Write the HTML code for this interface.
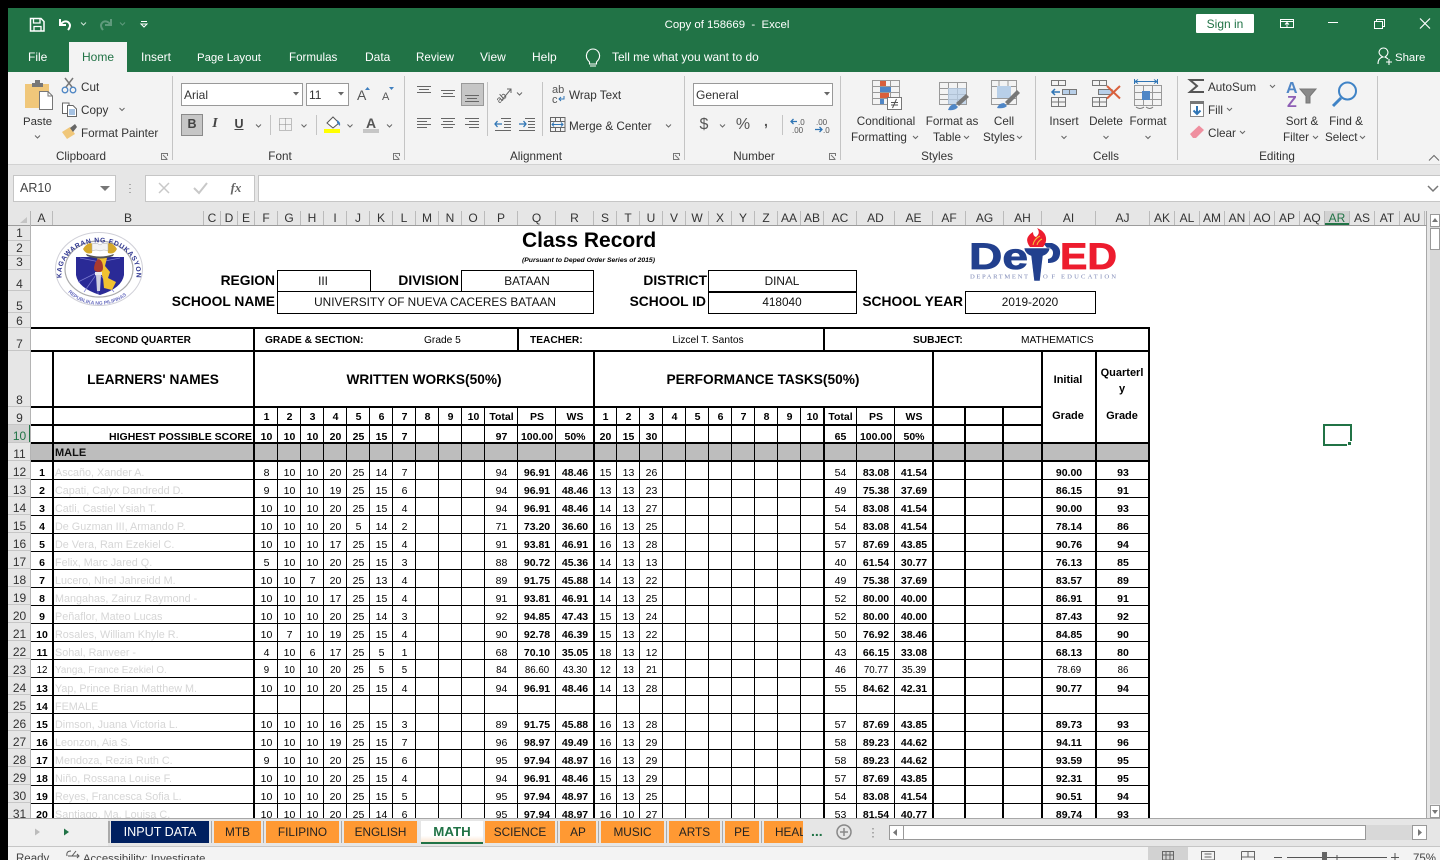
<!DOCTYPE html>
<html><head><meta charset="utf-8"><title>Copy of 158669 - Excel</title>
<style>
html,body{margin:0;padding:0;background:#000;width:1440px;height:860px;overflow:hidden}
body{position:relative;font-family:"Liberation Sans",sans-serif}
.a{position:absolute}
.t{position:absolute;white-space:nowrap;line-height:16px;font-size:11.7px;color:#333}
.t:not([style*="font-size"]):not(.h):not(.s):not(.v):not(.m):not(.g):not(.w){margin-top:1px}
.c{transform:translateX(-50%)}
.r{transform:translateX(-100%)}
.w{color:#fff;font-size:12px}
.k{color:#000}.b{font-weight:bold}
.h{font-size:13.8px;font-weight:bold;color:#000}
.s{font-size:10.2px;color:#000}
.v{font-size:11.8px;color:#111}
.m{font-size:13.7px;font-weight:bold;color:#000}
.g{font-size:11px;font-weight:bold;color:#000}
.l{position:absolute;background:#000}
#cols{position:absolute;left:31px;top:211px;height:14px;display:flex}
#cols i{font-style:normal;display:block;box-sizing:border-box;border-right:1px solid #bbb;text-align:center;font-size:12px;line-height:14px;color:#333;height:14px}
#rows{position:absolute;left:8px;top:225px;width:23px;height:593px;overflow:hidden;background:#e6e6e6}
#rows i{font-style:normal;display:flex;align-items:flex-end;justify-content:center;box-sizing:border-box;border-bottom:1px solid #c6c6c6;font-size:12px;line-height:14px;color:#333}
#rows i:nth-child(n+4){line-height:12px}
#sheet{position:absolute;left:31px;top:225px;width:1395px;height:593px;background:#fff;overflow:hidden}
#tb{position:absolute;left:0;top:184px;border-collapse:collapse;table-layout:fixed;width:1119px;font-size:10.5px;color:#000}
#tb td{padding:0;text-align:center;height:18px;line-height:18px;overflow:hidden;white-space:nowrap;vertical-align:top}
#tb tr.n td{line-height:16px}
#tb tr.p td{line-height:16px;padding-top:2px;height:16px}
#tb tr.d td{line-height:16px;padding-top:2px;height:16px}
#tb tr.d td:nth-child(1),#tb tr.d td:nth-child(12),#tb tr.d td:nth-child(13),#tb tr.d td:nth-child(19),#tb tr.d td:nth-child(20),#tb tr.d td:nth-child(22),#tb tr.d td:nth-child(23){font-weight:bold}
#tb tr.d td:nth-child(2){text-align:left;padding-left:2px;color:#d6d6d6;font-size:10.8px;font-weight:normal}
#tb tr.z td,#tb tr.z td:nth-child(n){font-weight:normal!important;font-size:9.7px}
#tb tr.z td:nth-child(2){font-size:9.9px}
#tb tr.o td{font-weight:bold}
.tab{position:absolute;top:821px;height:22px;line-height:22px;background:#ff9933;color:#222;font-size:11.8px;text-align:center;overflow:hidden;white-space:nowrap}
.sep{position:absolute;top:821px;width:1px;height:22px;background:#aaa}
</style></head><body>

<!-- app chrome backgrounds -->
<div class="a" style="left:8px;top:8px;width:1432px;height:852px;background:#e6e6e6"></div>
<div class="a" style="left:8px;top:8px;width:1432px;height:64px;background:#217346"></div>
<div class="a" style="left:8px;top:72px;width:1432px;height:92px;background:#f3f3f3"></div>
<div class="a" style="left:8px;top:164px;width:1432px;height:1px;background:#d2d2d2"></div>
<div class="a" style="left:69px;top:42px;width:58px;height:30px;background:#f3f3f3"></div>

<!-- Title bar text -->
<span class="t w c" style="left:727px;top:17px;font-size:11.4px">Copy of 158669 &nbsp;-&nbsp; Excel</span>
<div class="a" style="left:1196px;top:14px;width:58px;height:19px;background:#fff;border-radius:1px"></div>
<span class="t c" style="left:1225px;top:16px;color:#217346;font-size:12px">Sign in</span>

<span class="t w" style="left:28px;top:49px">File</span>
<span class="t c" style="left:98px;top:49px;color:#217346;font-size:12px">Home</span>
<span class="t w" style="left:141px;top:49px">Insert</span>
<span class="t w" style="left:197px;top:50px;font-size:11.4px">Page Layout</span>
<span class="t w" style="left:289px;top:50px;font-size:11.6px">Formulas</span>
<span class="t w" style="left:365px;top:49px">Data</span>
<span class="t w" style="left:416px;top:50px;font-size:11.6px">Review</span>
<span class="t w" style="left:480px;top:49px">View</span>
<span class="t w" style="left:532px;top:49px">Help</span>
<span class="t w" style="left:612px;top:49px;font-size:11.9px">Tell me what you want to do</span>
<span class="t w" style="left:1395px;top:50px;font-size:11.4px">Share</span>

<!-- Ribbon text -->
<span class="t" style="left:23px;top:114px;font-size:11.4px">Paste</span>
<span class="t" style="left:81px;top:79px">Cut</span>
<span class="t" style="left:81px;top:102px">Copy</span>
<span class="t" style="left:81px;top:125px">Format Painter</span>
<span class="t c" style="left:81px;top:148px">Clipboard</span>
<span class="t c" style="left:280px;top:148px">Font</span>
<span class="t c" style="left:536px;top:148px">Alignment</span>
<span class="t c" style="left:754px;top:148px">Number</span>
<span class="t c" style="left:937px;top:148px">Styles</span>
<span class="t c" style="left:1106px;top:148px">Cells</span>
<span class="t c" style="left:1277px;top:148px">Editing</span>

<div class="a" style="left:181px;top:83px;width:120px;height:21px;background:#fff;border:1px solid #999"></div>
<div class="a" style="left:306px;top:83px;width:41px;height:21px;background:#fff;border:1px solid #999"></div>
<span class="t" style="left:184px;top:87px;font-size:12px">Arial</span>
<span class="t" style="left:309px;top:87px;font-size:12px">11</span>
<div class="a" style="left:181px;top:114px;width:22px;height:22px;background:#c6c6c6;border:1px solid #8a8a8a;box-sizing:border-box"></div>
<span class="t b c" style="left:192px;top:116px;font-size:12.5px;color:#444">B</span>
<span class="t c" style="left:215px;top:116px;font-style:italic;font-family:'Liberation Serif',serif;font-size:14px;font-weight:bold;color:#444">I</span>
<span class="t b c" style="left:239px;top:116px;font-size:12.5px;color:#444;text-decoration:underline">U</span>
<span class="t" style="left:569px;top:87px">Wrap Text</span>
<span class="t" style="left:569px;top:118px">Merge &amp; Center</span>
<div class="a" style="left:693px;top:83px;width:138px;height:21px;background:#fff;border:1px solid #999"></div>
<span class="t" style="left:696px;top:87px;font-size:12px">General</span>
<span class="t c" style="left:704px;top:117px;font-size:16px;color:#555">$</span>
<span class="t c" style="left:743px;top:117px;font-size:16px;color:#555">%</span>
<span class="t c" style="left:766px;top:113px;font-size:14px;font-weight:bold;color:#555">,</span>
<span class="t c" style="left:886px;top:113px">Conditional</span>
<span class="t" style="left:851px;top:129px">Formatting</span>
<span class="t c" style="left:952px;top:113px">Format as</span>
<span class="t" style="left:933px;top:129px">Table</span>
<span class="t c" style="left:1004px;top:113px">Cell</span>
<span class="t" style="left:983px;top:129px">Styles</span>
<span class="t c" style="left:1064px;top:113px">Insert</span>
<span class="t c" style="left:1106px;top:113px">Delete</span>
<span class="t c" style="left:1148px;top:113px">Format</span>
<span class="t" style="left:1208px;top:79px">AutoSum</span>
<span class="t" style="left:1208px;top:102px">Fill</span>
<span class="t" style="left:1208px;top:125px">Clear</span>
<span class="t c" style="left:1302px;top:113px">Sort &amp;</span>
<span class="t" style="left:1283px;top:129px">Filter</span>
<span class="t c" style="left:1346px;top:113px">Find &amp;</span>
<span class="t" style="left:1325px;top:129px">Select</span>

<div class="a" style="left:461px;top:83px;width:23px;height:23px;background:#c6c6c6;border:1px solid #999;box-sizing:border-box"></div>

<!-- Formula bar -->
<div class="a" style="left:13px;top:175px;width:101px;height:25px;background:#fff;border:1px solid #c6c6c6"></div>
<div class="a" style="left:145px;top:175px;width:108px;height:25px;background:#fff;border:1px solid #c6c6c6"></div>
<div class="a" style="left:258px;top:175px;width:1190px;height:25px;background:#fff;border:1px solid #c6c6c6"></div>
<span class="t" style="left:20px;top:180px;font-size:12.5px;color:#444">AR10</span>
<span class="t c" style="left:236px;top:180px;font-family:'Liberation Serif',serif;font-style:italic;font-weight:bold;font-size:13px;color:#666">fx</span>

<!-- Column headers -->
<div class="a" style="left:8px;top:211px;width:1432px;height:14px;background:#e6e6e6"></div>
<div id="cols"><i style="width:22px">A</i><i style="width:151px">B</i><i style="width:17px">C</i><i style="width:17px">D</i><i style="width:17px">E</i><i style="width:23px">F</i><i style="width:23px">G</i><i style="width:23px">H</i><i style="width:23px">I</i><i style="width:23px">J</i><i style="width:23px">K</i><i style="width:23px">L</i><i style="width:23px">M</i><i style="width:23px">N</i><i style="width:23px">O</i><i style="width:33px">P</i><i style="width:38px">Q</i><i style="width:38px">R</i><i style="width:23px">S</i><i style="width:23px">T</i><i style="width:23px">U</i><i style="width:23px">V</i><i style="width:23px">W</i><i style="width:23px">X</i><i style="width:23px">Y</i><i style="width:23px">Z</i><i style="width:23px">AA</i><i style="width:23px">AB</i><i style="width:33px">AC</i><i style="width:38px">AD</i><i style="width:38px">AE</i><i style="width:33px">AF</i><i style="width:38px">AG</i><i style="width:38px">AH</i><i style="width:54px">AI</i><i style="width:54px">AJ</i><i style="width:25px">AK</i><i style="width:25px">AL</i><i style="width:25px">AM</i><i style="width:25px">AN</i><i style="width:25px">AO</i><i style="width:25px">AP</i><i style="width:25px">AQ</i><i style="width:25px;background:#d2d2d2;color:#217346;box-shadow:inset 0 -2px 0 #217346">AR</i><i style="width:25px">AS</i><i style="width:25px">AT</i><i style="width:25px">AU</i></div>
<div class="a" style="left:8px;top:225px;width:1419px;height:1px;background:#9c9c9c;z-index:3"></div>
<div class="a" style="left:30px;top:211px;width:1px;height:607px;background:#b4b4b4;z-index:3"></div>

<!-- Row headers -->
<div id="rows"><i style="height:16px">1</i><i style="height:15px">2</i><i style="height:14px">3</i><i style="height:21px">4</i><i style="height:22px">5</i><i style="height:15px">6</i><i style="height:23px">7</i><i style="height:56px">8</i><i style="height:18px">9</i><i style="height:18px;background:#d2d2d2;color:#217346;box-shadow:inset -2px 0 0 #217346">10</i><i style="height:18px">11</i><i style="height:18px">12</i><i style="height:18px">13</i><i style="height:18px">14</i><i style="height:18px">15</i><i style="height:18px">16</i><i style="height:18px">17</i><i style="height:18px">18</i><i style="height:18px">19</i><i style="height:18px">20</i><i style="height:18px">21</i><i style="height:18px">22</i><i style="height:18px">23</i><i style="height:18px">24</i><i style="height:18px">25</i><i style="height:18px">26</i><i style="height:18px">27</i><i style="height:18px">28</i><i style="height:18px">29</i><i style="height:18px">30</i><i style="height:18px">31</i></div>

<!-- Sheet -->
<div id="sheet">
<div class="a" style="left:0;top:219px;width:1118px;height:17px;background:#bdbdbd"></div>
<table id="tb"><colgroup><col style="width:22px"><col style="width:202px"><col span="10" style="width:23px"><col style="width:33px"><col span="2" style="width:38px"><col span="10" style="width:23px"><col style="width:33px"><col span="2" style="width:38px"><col style="width:33px"><col span="2" style="width:38px"><col span="2" style="width:54px"></colgroup>
<tr class="o n"><td><td><td>1<td>2<td>3<td>4<td>5<td>6<td>7<td>8<td>9<td>10<td>Total<td>PS<td>WS<td>1<td>2<td>3<td>4<td>5<td>6<td>7<td>8<td>9<td>10<td>Total<td>PS<td>WS<td colspan="5"></tr>
<tr class="o p"><td><td style="text-align:right;padding-right:3px">HIGHEST POSSIBLE SCORE<td>10<td>10<td>10<td>20<td>25<td>15<td>7<td colspan="3"><td>97<td>100.00<td>50%<td>20<td>15<td>30<td colspan="7"><td>65<td>100.00<td>50%<td colspan="5"></tr>
<tr class="n"><td colspan="33" style="text-align:left;padding-left:24px;font-weight:bold;font-size:11px;color:#111">MALE</td></tr>
<tr class="d"><td>1<td>Ascaño, Xander A.<td>8<td>10<td>10<td>20<td>25<td>14<td>7<td colspan="3"><td>94<td>96.91<td>48.46<td>15<td>13<td>26<td colspan="7"><td>54<td>83.08<td>41.54<td colspan="3"><td>90.00<td>93</tr>
<tr class="d"><td>2<td>Capati, Calyx Dandredd D.<td>9<td>10<td>10<td>19<td>25<td>15<td>6<td colspan="3"><td>94<td>96.91<td>48.46<td>13<td>13<td>23<td colspan="7"><td>49<td>75.38<td>37.69<td colspan="3"><td>86.15<td>91</tr>
<tr class="d"><td>3<td>Catli, Castiel Ysiah T.<td>10<td>10<td>10<td>20<td>25<td>15<td>4<td colspan="3"><td>94<td>96.91<td>48.46<td>14<td>13<td>27<td colspan="7"><td>54<td>83.08<td>41.54<td colspan="3"><td>90.00<td>93</tr>
<tr class="d"><td>4<td>De Guzman III, Armando P.<td>10<td>10<td>10<td>20<td>5<td>14<td>2<td colspan="3"><td>71<td>73.20<td>36.60<td>16<td>13<td>25<td colspan="7"><td>54<td>83.08<td>41.54<td colspan="3"><td>78.14<td>86</tr>
<tr class="d"><td>5<td>De Vera, Ram Ezekiel C.<td>10<td>10<td>10<td>17<td>25<td>15<td>4<td colspan="3"><td>91<td>93.81<td>46.91<td>16<td>13<td>28<td colspan="7"><td>57<td>87.69<td>43.85<td colspan="3"><td>90.76<td>94</tr>
<tr class="d"><td>6<td>Felix, Marc Jared Q.<td>5<td>10<td>10<td>20<td>25<td>15<td>3<td colspan="3"><td>88<td>90.72<td>45.36<td>14<td>13<td>13<td colspan="7"><td>40<td>61.54<td>30.77<td colspan="3"><td>76.13<td>85</tr>
<tr class="d"><td>7<td>Lucero, Nhel Jahreidd M.<td>10<td>10<td>7<td>20<td>25<td>13<td>4<td colspan="3"><td>89<td>91.75<td>45.88<td>14<td>13<td>22<td colspan="7"><td>49<td>75.38<td>37.69<td colspan="3"><td>83.57<td>89</tr>
<tr class="d"><td>8<td>Mangahas, Zairuz Raymond -<td>10<td>10<td>10<td>17<td>25<td>15<td>4<td colspan="3"><td>91<td>93.81<td>46.91<td>14<td>13<td>25<td colspan="7"><td>52<td>80.00<td>40.00<td colspan="3"><td>86.91<td>91</tr>
<tr class="d"><td>9<td>Peñaflor, Mateo Lucas<td>10<td>10<td>10<td>20<td>25<td>14<td>3<td colspan="3"><td>92<td>94.85<td>47.43<td>15<td>13<td>24<td colspan="7"><td>52<td>80.00<td>40.00<td colspan="3"><td>87.43<td>92</tr>
<tr class="d"><td>10<td>Rosales, William Khyle R.<td>10<td>7<td>10<td>19<td>25<td>15<td>4<td colspan="3"><td>90<td>92.78<td>46.39<td>15<td>13<td>22<td colspan="7"><td>50<td>76.92<td>38.46<td colspan="3"><td>84.85<td>90</tr>
<tr class="d"><td>11<td>Sohal, Ranveer -<td>4<td>10<td>6<td>17<td>25<td>5<td>1<td colspan="3"><td>68<td>70.10<td>35.05<td>18<td>13<td>12<td colspan="7"><td>43<td>66.15<td>33.08<td colspan="3"><td>68.13<td>80</tr>
<tr class="d z"><td>12<td>Yanga, France Ezekiel O.<td>9<td>10<td>10<td>20<td>25<td>5<td>5<td colspan="3"><td>84<td>86.60<td>43.30<td>12<td>13<td>21<td colspan="7"><td>46<td>70.77<td>35.39<td colspan="3"><td>78.69<td>86</tr>
<tr class="d"><td>13<td>Yap, Prince Brian Matthew M.<td>10<td>10<td>10<td>20<td>25<td>15<td>4<td colspan="3"><td>94<td>96.91<td>48.46<td>14<td>13<td>28<td colspan="7"><td>55<td>84.62<td>42.31<td colspan="3"><td>90.77<td>94</tr>
<tr class="d"><td>14<td>FEMALE<td colspan="7"><td colspan="3"><td><td><td><td><td><td><td colspan="7"><td><td><td><td colspan="3"><td><td></tr>
<tr class="d"><td>15<td>Dimson, Juana Victoria L.<td>10<td>10<td>10<td>16<td>25<td>15<td>3<td colspan="3"><td>89<td>91.75<td>45.88<td>16<td>13<td>28<td colspan="7"><td>57<td>87.69<td>43.85<td colspan="3"><td>89.73<td>93</tr>
<tr class="d"><td>16<td>Leonzon, Aia S.<td>10<td>10<td>10<td>19<td>25<td>15<td>7<td colspan="3"><td>96<td>98.97<td>49.49<td>16<td>13<td>29<td colspan="7"><td>58<td>89.23<td>44.62<td colspan="3"><td>94.11<td>96</tr>
<tr class="d"><td>17<td>Mendoza, Rezia Ruth C.<td>9<td>10<td>10<td>20<td>25<td>15<td>6<td colspan="3"><td>95<td>97.94<td>48.97<td>16<td>13<td>29<td colspan="7"><td>58<td>89.23<td>44.62<td colspan="3"><td>93.59<td>95</tr>
<tr class="d"><td>18<td>Niño, Rossana Louise F.<td>10<td>10<td>10<td>20<td>25<td>15<td>4<td colspan="3"><td>94<td>96.91<td>48.46<td>15<td>13<td>29<td colspan="7"><td>57<td>87.69<td>43.85<td colspan="3"><td>92.31<td>95</tr>
<tr class="d"><td>19<td>Reyes, Francesca Sofia L.<td>10<td>10<td>10<td>20<td>25<td>15<td>5<td colspan="3"><td>95<td>97.94<td>48.97<td>16<td>13<td>25<td colspan="7"><td>54<td>83.08<td>41.54<td colspan="3"><td>90.51<td>94</tr>
<tr class="d"><td>20<td>Santiago, Ma. Louisa C.<td>10<td>10<td>10<td>20<td>25<td>14<td>6<td colspan="3"><td>95<td>97.94<td>48.97<td>16<td>10<td>27<td colspan="7"><td>53<td>81.54<td>40.77<td colspan="3"><td>89.74<td>93</tr>
</table>
</div>

<!-- overlay text & lines in page coordinates -->
<div class="a" style="left:0;top:0;width:1426px;height:818px;overflow:hidden;pointer-events:none">
<span class="t b k" style="left:522px;top:231px;font-size:21px;line-height:20px">Class Record</span>
<span class="t k" style="left:522px;top:253px;font-size:6.8px;font-style:italic;font-weight:bold">(Pursuant to Deped Order Series of 2015)</span>

<span class="t h r" style="left:275px;top:273px">REGION</span>
<span class="t h r" style="left:459px;top:273px">DIVISION</span>
<span class="t h r" style="left:707px;top:273px">DISTRICT</span>
<span class="t h r" style="left:275px;top:294px">SCHOOL NAME</span>
<span class="t h r" style="left:706px;top:294px">SCHOOL ID</span>
<span class="t h r" style="left:963px;top:294px">SCHOOL YEAR</span>
<span class="t v c" style="left:323px;top:273px">III</span>
<span class="t v c" style="left:527px;top:273px">BATAAN</span>
<span class="t v c" style="left:435px;top:294px">UNIVERSITY OF NUEVA CACERES BATAAN</span>
<span class="t v c" style="left:782px;top:273px">DINAL</span>
<span class="t v c" style="left:782px;top:294px">418040</span>
<span class="t v c" style="left:1030px;top:294px">2019-2020</span>

<span class="t s b c" style="left:143px;top:333px;font-size:10.1px">SECOND QUARTER</span>
<span class="t s b" style="left:265px;top:333px">GRADE &amp; SECTION:</span>
<span class="t s" style="left:424px;top:333px">Grade 5</span>
<span class="t s b" style="left:530px;top:333px">TEACHER:</span>
<span class="t s c" style="left:708px;top:333px">Lizcel T. Santos</span>
<span class="t s b" style="left:913px;top:333px">SUBJECT:</span>
<span class="t s" style="left:1021px;top:333px">MATHEMATICS</span>

<span class="t m c" style="left:153px;top:372px">LEARNERS' NAMES</span>
<span class="t m c" style="left:424px;top:372px">WRITTEN WORKS(50%)</span>
<span class="t m c" style="left:763px;top:372px">PERFORMANCE TASKS(50%)</span>
<span class="t g c" style="left:1068px;top:372px">Initial</span>
<span class="t g c" style="left:1068px;top:408px">Grade</span>
<span class="t g c" style="left:1122px;top:365px">Quarterl</span>
<span class="t g c" style="left:1122px;top:381px">y</span>
<span class="t g c" style="left:1122px;top:408px">Grade</span>

<!-- info boxes -->
<div class="a" style="left:277px;top:270px;width:92px;height:21px;border:1px solid #000;border-bottom:0"></div>
<div class="a" style="left:461px;top:270px;width:131px;height:21px;border:1px solid #000;border-bottom:0"></div>
<div class="a" style="left:277px;top:291px;width:315px;height:21px;border:1px solid #000"></div>
<div class="a" style="left:708px;top:270px;width:147px;height:21px;border:1px solid #000"></div>
<div class="a" style="left:708px;top:291px;width:147px;height:21px;border:1px solid #000"></div>
<div class="a" style="left:965px;top:291px;width:129px;height:21px;border:1px solid #000"></div>

<!-- thick horizontals -->
<div class="l" style="left:31px;top:327px;width:1119px;height:2px"></div>
<div class="l" style="left:31px;top:350px;width:1119px;height:2px"></div>
<div class="l" style="left:31px;top:406px;width:1010px;height:2px"></div>
<div class="l" style="left:31px;top:424px;width:1010px;height:2px"></div>
<div class="l" style="left:31px;top:442px;width:1119px;height:2px"></div>
<div class="l" style="left:31px;top:460px;width:1119px;height:2px"></div>
<!-- thin horizontals -->
<div class="a" style="left:31px;top:462px;width:1119px;height:356px;background:repeating-linear-gradient(to bottom,transparent 0,transparent 17px,#000 17px,#000 18px)"></div>
<!-- thick verticals -->
<div class="l" style="left:52px;top:351px;width:2px;height:467px"></div>
<div class="l" style="left:253px;top:328px;width:2px;height:490px"></div>
<div class="l" style="left:517px;top:328px;width:2px;height:23px"></div>
<div class="l" style="left:823px;top:328px;width:2px;height:23px"></div>
<div class="l" style="left:593px;top:351px;width:2px;height:467px"></div>
<div class="l" style="left:823px;top:407px;width:2px;height:411px"></div>
<div class="l" style="left:932px;top:351px;width:2px;height:467px"></div>
<div class="l" style="left:964px;top:407px;width:2px;height:411px"></div>
<div class="l" style="left:1002px;top:407px;width:2px;height:411px"></div>
<div class="l" style="left:1041px;top:351px;width:2px;height:467px"></div>
<div class="l" style="left:1095px;top:351px;width:2px;height:467px"></div>
<div class="l" style="left:1148px;top:328px;width:2px;height:490px"></div>
<!-- thin verticals -->
<div class="l" style="left:277px;top:407px;width:1px;height:411px"></div>
<div class="l" style="left:300px;top:407px;width:1px;height:411px"></div>
<div class="l" style="left:323px;top:407px;width:1px;height:411px"></div>
<div class="l" style="left:346px;top:407px;width:1px;height:411px"></div>
<div class="l" style="left:369px;top:407px;width:1px;height:411px"></div>
<div class="l" style="left:392px;top:407px;width:1px;height:411px"></div>
<div class="l" style="left:415px;top:407px;width:1px;height:411px"></div>
<div class="l" style="left:438px;top:407px;width:1px;height:411px"></div>
<div class="l" style="left:461px;top:407px;width:1px;height:411px"></div>
<div class="l" style="left:484px;top:407px;width:1px;height:411px"></div>
<div class="l" style="left:517px;top:407px;width:1px;height:411px"></div>
<div class="l" style="left:555px;top:407px;width:1px;height:411px"></div>
<div class="l" style="left:616px;top:407px;width:1px;height:411px"></div>
<div class="l" style="left:639px;top:407px;width:1px;height:411px"></div>
<div class="l" style="left:662px;top:407px;width:1px;height:411px"></div>
<div class="l" style="left:685px;top:407px;width:1px;height:411px"></div>
<div class="l" style="left:708px;top:407px;width:1px;height:411px"></div>
<div class="l" style="left:731px;top:407px;width:1px;height:411px"></div>
<div class="l" style="left:754px;top:407px;width:1px;height:411px"></div>
<div class="l" style="left:777px;top:407px;width:1px;height:411px"></div>
<div class="l" style="left:800px;top:407px;width:1px;height:411px"></div>
<div class="l" style="left:856px;top:407px;width:1px;height:411px"></div>
<div class="l" style="left:894px;top:407px;width:1px;height:411px"></div>

<!-- selected cell -->
<div class="a" style="left:1323px;top:424px;width:25px;height:18px;border:2px solid #217346"></div>
<div class="a" style="left:1347px;top:441px;width:5px;height:5px;background:#217346;border:1px solid #fff;box-sizing:border-box"></div>

<!-- seal logo -->
<svg class="a" style="left:50px;top:228px" width="100" height="84" viewBox="50 228 100 84">
<defs>
<path id="ta" d="M62 279 A37.5 31.5 0 1 1 136 279"/>
<path id="tb2" d="M64 287 A39.5 33 0 0 0 134 287"/>
</defs>
<ellipse cx="99" cy="269" rx="43.5" ry="36.5" fill="#fff" stroke="#d0d0d8" stroke-width="1"/>
<ellipse cx="99" cy="269" rx="34" ry="28" fill="#fff" stroke="#aaa" stroke-width="1.2"/>
<text font-size="6.8" font-weight="bold" fill="#2f3690" textLength="116"><textPath href="#ta" startOffset="1%">KAGAWARAN NG EDUKASYON</textPath></text>
<text font-size="5" font-weight="bold" fill="#6a6fc0"><textPath href="#tb2" startOffset="8%">REPUBLIKA NG PILIPINAS</textPath></text>
<path d="M76 257 H124 V275 Q122 288 100 295 Q78 288 76 275Z" fill="#2a2a96"/>
<path d="M100 262 L80 258 M100 262 L120 258 M98 272 L78 282 M98 272 L84 292 M98 272 L98 294 M98 272 L114 292" stroke="#7a7ad0" stroke-width=".7"/>
<path d="M97 257 L107 258 L105 266 L110 272 L108 278 L116 282 L112 290 L104 288 L103 278 L99 268Z" fill="#f2c230"/>
<path d="M94 268 Q95 260 99 259 Q103 261 103 268 Q103 272 98.500 272 Q94 272 94 268Z" fill="#a83a30"/>
<rect x="95" y="272" width="7" height="3" fill="#e8e8f0"/><path d="M96 275 H101 L100 291 H97Z" fill="#d0d0e0"/>
<g transform="translate(0 3)">
<path d="M83 246 Q88 238 93 241 L92 250 Q86 252 83 246Z M117 246 Q112 238 107 241 L108 250 Q114 252 117 246Z" fill="#d6a92a"/>
<path d="M92 241 Q96 239 100 242 Q104 239 108 241 V248 Q104 246 100 248 Q96 246 92 248Z" fill="#f4f4f4" stroke="#aaa" stroke-width=".5"/>
<path d="M86 251 Q100 256 114 251 L113 253 Q100 258 87 253Z" fill="#555"/>
</g>
</svg>

<!-- DepED logo -->
<svg class="a" style="left:965px;top:226px" width="156" height="56" viewBox="965 226 156 56">
<text x="969" y="269" font-size="37" font-weight="bold" fill="#22408e" stroke="#22408e" stroke-width=".8" textLength="59" lengthAdjust="spacingAndGlyphs">De</text>
<text x="1060" y="269" font-size="37" font-weight="bold" fill="#ed1c2e" stroke="#ed1c2e" stroke-width=".8" textLength="57" lengthAdjust="spacingAndGlyphs">ED</text>
<path d="M1043 243 H1052 Q1061 246 1060 254 Q1059 263 1048 263 V259 Q1053 258 1053 253 Q1053 248 1047 248Z" fill="#22408e"/>
<path d="M1024 248 H1050 Q1049 254 1043 256 L1040 281 H1034 L1031 256 Q1025 254 1024 248Z" fill="#22408e" stroke="#fff" stroke-width=".6"/>
<path d="M1030 247 Q1023 238 1033 232 Q1033 236 1036 237 Q1041 233 1037 228 Q1047 232 1046 241 Q1045 245 1043 247Z" fill="#ed1c2e"/>
<path d="M1033 245 Q1034 239 1040 236 M1037 245 Q1038 241 1042 239" stroke="#f5c23a" stroke-width="1" fill="none"/>
<text x="970" y="278.500" font-size="6.600" font-family="Liberation Serif,serif" fill="#7b86b4" textLength="58">DEPARTMENT</text>
<text x="1043" y="278.500" font-size="6.600" font-family="Liberation Serif,serif" fill="#7b86b4" textLength="12">OF</text>
<text x="1061" y="278.500" font-size="6.600" font-family="Liberation Serif,serif" fill="#7b86b4" textLength="55">EDUCATION</text>
</svg>
</div>

<!-- right scrollbar -->
<div class="a" style="left:1426px;top:211px;width:1px;height:607px;background:#a8a8a8"></div>
<div class="a" style="left:1427px;top:211px;width:13px;height:607px;background:#e6e6e6"></div>
<div class="a" style="left:1430px;top:226px;width:10px;height:578px;background:#d8d8d8"></div>
<div class="a" style="left:1430px;top:214px;width:10px;height:13px;background:#fff;border:1px solid #999;box-sizing:border-box"></div>
<div class="a" style="left:1430px;top:228px;width:10px;height:22px;background:#fff;border:1px solid #999;box-sizing:border-box"></div>
<div class="a" style="left:1430px;top:805px;width:10px;height:13px;background:#fff;border:1px solid #999;box-sizing:border-box"></div>

<!-- bottom tab bar -->
<div class="a" style="left:8px;top:818px;width:1432px;height:1px;background:#a8a8a8"></div>
<div class="a" style="left:8px;top:819px;width:1432px;height:27px;background:#e6e6e6"></div>
<div class="a" style="left:8px;top:819px;width:100px;height:27px;background:#f0f0f0"></div>
<div class="a" style="left:8px;top:846px;width:1432px;height:1px;background:#c6c6c6"></div>
<div class="a" style="left:8px;top:847px;width:1432px;height:13px;background:#f3f3f3"></div>
<div class="sep" style="left:108px;width:2px"></div>
<div class="tab" style="left:111px;width:98px;background:#002060;color:#fff;font-size:12.6px">INPUT DATA</div>
<div class="sep" style="left:211px"></div>
<div class="tab" style="left:214px;width:47px">MTB</div>
<div class="sep" style="left:263px"></div>
<div class="tab" style="left:266px;width:73px">FILIPINO</div>
<div class="sep" style="left:341px"></div>
<div class="tab" style="left:344px;width:73px">ENGLISH</div>
<div class="tab" style="left:421px;width:62px;background:linear-gradient(#fff 0,#fff 70%,#fbe7d3);height:21px;color:#217346;font-size:13.3px;font-weight:bold;border-bottom:2px solid #217346;line-height:21px">MATH</div>
<div class="tab" style="left:485px;width:70px">SCIENCE</div>
<div class="sep" style="left:557px"></div>
<div class="tab" style="left:560px;width:36px">AP</div>
<div class="sep" style="left:598px"></div>
<div class="tab" style="left:601px;width:63px">MUSIC</div>
<div class="sep" style="left:666px"></div>
<div class="tab" style="left:669px;width:51px">ARTS</div>
<div class="sep" style="left:722px"></div>
<div class="tab" style="left:725px;width:34px">PE</div>
<div class="sep" style="left:761px"></div>
<div class="tab" style="left:764px;width:39px;text-align:left;text-indent:11px">HEALTH</div>
<span class="t b" style="left:811px;top:823px;color:#217346;font-size:14px">...</span>

<div class="a" style="left:889px;top:825px;width:524px;height:15px;background:#d8d8d8"></div>
<div class="a" style="left:889px;top:825px;width:15px;height:15px;background:#fff;border:1px solid #999;box-sizing:border-box"></div>
<div class="a" style="left:904px;top:825px;width:462px;height:15px;background:#fff;border:1px solid #999;border-left:0;box-sizing:border-box"></div>
<div class="a" style="left:1412px;top:825px;width:15px;height:15px;background:#fff;border:1px solid #999;box-sizing:border-box"></div>

<!-- status bar -->
<span class="t" style="left:16px;top:851px;font-size:11.5px;color:#444">Ready</span>
<span class="t" style="left:83px;top:851px;font-size:11.3px;color:#444">Accessibility: Investigate</span>
<div class="a" style="left:1148px;top:847px;width:40px;height:13px;background:#d2d2d2"></div>
<span class="t" style="left:1413px;top:851px;font-size:11.5px;color:#444">75%</span>

<!-- icons overlay -->
<svg class="a" style="left:0;top:0;pointer-events:none" width="1440" height="860" viewBox="0 0 1440 860" fill="none">
<!-- QAT -->
<g stroke="#fff" stroke-width="1.5"><path d="M30.500 18.500 H41 L44 21.500 V31 H30.500Z"/><path d="M33.500 18.500 V23 H40 V18.500 M34 31 V26.500 H41 V31" stroke-width="1.3"/></g>
<path d="M60 19 V25 H66 M60.500 24.500 Q64 20 68 22 Q72 25 68 30" stroke="#fff" stroke-width="2"/>
<path d="M81 22.500 l2.500 2.500 2.500-2.500" stroke="#cfe3d7"/>
<path d="M111 19 V25 H105 M110.500 24.500 Q107 20 103 22 Q99 25 103 30" stroke="#5f9a7c" stroke-width="2"/>
<path d="M120 22.500 l2.500 2.500 2.500-2.500" stroke="#5f9a7c"/>
<path d="M141 21.500 H147 M141 24 H147 L144 27Z" stroke="#fff"/>
<!-- window controls -->
<g stroke="#fff"><path d="M1280.500 19.500 H1293.500 V27.500 H1280.500Z M1280.500 21.500 H1293.500 M1287 27 V22.500 M1285 24.500 L1287 22.500 L1289 24.500"/>
<path d="M1328 22.500 H1338"/><path d="M1374.500 21.500 H1382.500 V28.500 H1374.500Z M1376.500 21 V19.500 H1384.500 V26.500 H1383"/><path d="M1420 18.500 L1430 28.500 M1430 18.500 L1420 28.500" stroke-width="1.2"/></g>
<!-- lightbulb -->
<path d="M589.500 62 Q585 58 587 53 Q589 49 593 49 Q597 49 599 53 Q601 58 596.500 62 V64 H589.500Z M590 66 H596" stroke="#fff" stroke-width="1.1"/>
<!-- share -->
<path d="M1378 64 Q1378 58 1383 57 Q1379 55 1379 52 Q1380 48 1383.500 48 Q1387 48 1388 52 Q1388 55 1385 57 Q1387 58 1388 59 M1386 62 H1392 M1389 59 V65" stroke="#fff" stroke-width="1.1"/>

<!-- ribbon dividers -->
<g stroke="#c4c4c4"><path d="M172.500 76 V160 M404.500 76 V160 M684.500 76 V160 M840.500 76 V160 M1035.500 76 V160 M1177.500 76 V160 M1377.500 76 V160"/>
<path d="M270.500 115 V135 M316.500 115 V135 M487.500 82 V136 M542.500 82 V136 M782.500 115 V135"/></g>
<!-- launchers -->
<g stroke="#777"><path d="M161.500 153.500 V159.500 H167.500 M161 153.500 H167.500 V156 M163 155 L167 159"/><path d="M393.500 153.500 V159.500 H399.500 M393 153.500 H399.500 V156 M395 155 L399 159"/><path d="M673.500 153.500 V159.500 H679.500 M673 153.500 H679.500 V156 M675 155 L679 159"/><path d="M829.500 153.500 V159.500 H835.500 M829 153.500 H835.500 V156 M831 155 L835 159"/></g>
<!-- paste -->
<path d="M25 84 H49 V108 H25Z" fill="#f0c77a"/>
<path d="M32 83 H35 V80 H40 V83 H43 V87 H32Z" fill="#777"/>
<path d="M39.500 91.500 H48 L52.500 96 V109.500 H39.500Z" fill="#fff" stroke="#777"/>
<path d="M48 91.500 V96 H52.500" stroke="#777"/>
<path d="M35 135.500 l2.500 2.500 2.500-2.500" stroke="#666"/>
<!-- cut -->
<circle cx="65" cy="90" r="2.800" stroke="#4e86c4" stroke-width="1.300"/><circle cx="73" cy="90" r="2.800" stroke="#4e86c4" stroke-width="1.300"/>
<path d="M66 87 L73 78 M72 87 L65 78" stroke="#777" stroke-width="1.500"/>
<!-- copy -->
<path d="M62.500 103 H69 V113.500 H62.500Z" stroke="#666" fill="#fff"/><path d="M67.500 105.500 H73 L76.500 109 V116.500 H67.500Z" stroke="#666" fill="#fff"/><path d="M69 110 H75 M69 112 H75 M69 114 H75" stroke="#4e86c4"/>
<path d="M119.500 108 l2.500 2.500 2.500-2.500" stroke="#666"/>
<!-- painter -->
<path d="M62 132 L70 127 L75 134 L67 139Z" fill="#f0c77a"/><path d="M70 128 L75 124 L77 127 L73 132Z" fill="#666"/>
<!-- font dropdowns -->
<g fill="#666"><path d="M293 92 H299 L296 95.500Z M338 92 H344 L341 95.500Z M824 92 H830 L827 95.500Z"/></g>
<text x="357" y="100" font-size="14" fill="#555" font-family="Liberation Sans">A</text><path d="M365 90 l2.500-3 2.500 3Z" fill="#3f7fbf"/>
<text x="382" y="100" font-size="11" fill="#555" font-family="Liberation Sans">A</text><path d="M389 87 l2.500 3 2.500-3Z" fill="#3f7fbf"/>
<g stroke="#666"><path d="M256 124.500 l2.500 2.500 2.500-2.500 M301.500 124.500 l2.500 2.500 2.500-2.500 M347.500 124.500 l2.500 2.500 2.500-2.500 M387 124.500 l2.500 2.500 2.500-2.500 M517 92.500 l2.500 2.500 2.500-2.500 M666 124.500 l2.500 2.500 2.500-2.500 M720 124.500 l2.500 2.500 2.500-2.500 M913 136 l2.500 2.500 2.500-2.500 M964 136 l2.500 2.500 2.500-2.500 M1017 136 l2.500 2.500 2.500-2.500 M1061.500 136 l2.500 2.500 2.500-2.500 M1103.500 136 l2.500 2.500 2.500-2.500 M1145.500 136 l2.500 2.500 2.500-2.500 M1270 85 l2.500 2.500 2.500-2.500 M1227 108 l2.500 2.500 2.500-2.500 M1240 131 l2.500 2.500 2.500-2.500 M1313 136 l2.500 2.500 2.500-2.500 M1360 136 l2.500 2.500 2.500-2.500"/></g>
<!-- borders icon -->
<path d="M279.500 118.500 H291.500 V130.500 H279.500Z M285.500 118.500 V130.500 M279.500 124.500 H291.500" stroke="#888" stroke-dasharray="1 1"/>
<!-- fill -->
<path d="M327 123 L333 117 L339 123 L333 128Z" fill="#fff" stroke="#555"/><path d="M337 120 Q341 122 340 126 L337 123Z" fill="#3f7fbf"/>
<rect x="324" y="129" width="16" height="4" fill="#ffff00"/>
<!-- font colour -->
<text x="366" y="128" font-size="14" font-weight="bold" fill="#555" font-family="Liberation Sans">A</text><rect x="363" y="129" width="16" height="4" fill="#c6c6c6"/>
<!-- align -->
<g stroke="#666"><path d="M417 86.500 H431 M419 89.500 H429 M417 92.500 H431"/><path d="M441 90.500 H455 M443 93.500 H453 M441 96.500 H455"/><path d="M465 95.500 H479 M467 98.500 H477 M465 101.500 H479"/>
<path d="M417 118.500 H431 M417 121.500 H427 M417 124.500 H431 M417 127.500 H427"/><path d="M441 118.500 H455 M443 121.500 H453 M441 124.500 H455 M443 127.500 H453"/><path d="M465 118.500 H479 M469 121.500 H479 M465 124.500 H479 M469 127.500 H479"/>
<path d="M501 118.500 H511 M504 121.500 H511 M504 124.500 H511 M504 127.500 H511 M495 130.500 H511"/><path d="M525 118.500 H535 M528 121.500 H535 M528 124.500 H535 M528 127.500 H535 M519 130.500 H535"/></g>
<path d="M495 124 H502 M497.500 121 L495 124 L497.500 127 M519 124 H526 M523.500 121 L526 124 L523.500 127" stroke="#2f75b5" stroke-width="1.300"/>
<text x="495" y="100" font-size="9.500" fill="#555" transform="rotate(-40 502 96)" font-family="Liberation Sans">ab</text><path d="M502 100 L511 89 M507 89 H511 V93" stroke="#666"/>
<!-- wrap text -->
<text x="552" y="93" font-size="11" fill="#555" font-family="Liberation Sans">ab</text><text x="552" y="103" font-size="11" fill="#555" font-family="Liberation Sans">c</text><path d="M564 96 V99 H559 M561 97 L559 99 L561 101" stroke="#2f75b5"/>
<!-- merge -->
<path d="M550.500 117.500 H565 V131.500 H550.500Z M550.500 121.500 H565 M550.500 127.500 H565 M555.500 117.500 V121.500 M560.500 117.500 V121.500 M555.500 127.500 V131.500 M560.500 127.500 V131.500" stroke="#666"/>
<path d="M552 124.500 H563 M554 122.500 L552 124.500 L554 126.500 M561 122.500 L563 124.500 L561 126.500" stroke="#2f75b5"/>
<!-- number decimals -->
<path d="M791 121.500 H797 M793.500 119 L791 121.500 L793.500 124" stroke="#2f75b5" stroke-width="1.300"/>
<path d="M815 129.500 H822 M819.500 127 L822 129.500 L819.500 132" stroke="#2f75b5" stroke-width="1.300"/>
<text x="798" y="125" font-size="8" fill="#555" font-family="Liberation Sans">.0</text><text x="792" y="133" font-size="8" fill="#555" font-family="Liberation Sans">.00</text>
<text x="816" y="125" font-size="8" fill="#555" font-family="Liberation Sans">.00</text><text x="823" y="133" font-size="8" fill="#555" font-family="Liberation Sans">.0</text>
<!-- conditional formatting -->
<path d="M872.500 80.500 H899.500 V104.500 H872.500Z M872.500 86.500 H899.500 M872.500 92.500 H899.500 M872.500 98.500 H899.500 M881.500 80.500 V104.500 M890.500 80.500 V104.500" stroke="#999"/>
<rect x="880" y="81" width="6" height="5" fill="#d9603c"/><rect x="880" y="87" width="11" height="5" fill="#4f86c6"/><rect x="880" y="93" width="9" height="5" fill="#d9603c"/><rect x="880" y="99" width="4" height="5" fill="#4f86c6"/>
<rect x="887.500" y="97.500" width="14" height="12" fill="#fff" stroke="#777"/>
<path d="M891 102.500 H898 M891 105 H898 M892.500 108 L896.500 99" stroke="#555"/>
<!-- format as table -->
<path d="M939.500 82.500 H966.500 V104.500 H939.500Z M939.500 88.500 H966.500 M939.500 94.500 H966.500 M939.500 99.500 H966.500 M948.500 82.500 V104.500 M957.500 82.500 V104.500" stroke="#999"/>
<rect x="948" y="88" width="18" height="16" fill="#b8cfe8" opacity=".75"/>
<path d="M948 110 Q950 104 955 104 L958 107 Q955 111 948 110Z" fill="#4f86c6"/><path d="M956 103 L966 94 L969 97 L959 106Z" fill="#777"/>
<!-- cell styles -->
<path d="M991.500 80.500 H1016.500 V104.500 H991.500Z M991.500 86.500 H1016.500 M991.500 98.500 H1016.500 M999 80.500 V86.500 M1008 80.500 V86.500" stroke="#999"/>
<rect x="997" y="86" width="14" height="12" fill="#b8cfe8"/>
<path d="M997 108 Q999 103 1004 103 L1007 106 Q1004 109 997 108Z" fill="#4f86c6"/><path d="M1005 102 L1017 90 L1020 93 L1008 105Z" fill="#777"/>
<!-- insert -->
<path d="M1051.500 80.500 H1065.500 V85.500 H1051.500Z M1058.500 80.500 V85.500 M1051.500 97.500 H1065.500 V106.500 H1051.500Z M1058.500 97.500 V106.500 M1051.500 102 H1065.500" stroke="#777"/>
<path d="M1062.500 89.500 H1076.500 V94.500 H1062.500Z M1069.500 89.500 V94.500" stroke="#777" fill="#b8cfe8"/>
<path d="M1052 92 H1060 M1055 89 L1052 92 L1055 95" stroke="#2f75b5" stroke-width="1.500"/>
<!-- delete -->
<path d="M1092.500 80.500 H1106.500 V85.500 H1092.500Z M1099.500 80.500 V85.500 M1092.500 97.500 H1106.500 V106.500 H1092.500Z M1099.500 97.500 V106.500 M1092.500 102 H1106.500" stroke="#777"/>
<path d="M1098.500 89.500 H1112 V94.500 H1098.500Z" stroke="#777" fill="#b8cfe8"/>
<path d="M1107 86 L1120 98.500 M1120 86 L1107 98.500" stroke="#d9603c" stroke-width="2"/>
<!-- format -->
<path d="M1134.500 85.500 H1161.500 V105.500 H1134.500Z M1134.500 92.500 H1161.500 M1134.500 99.500 H1161.500 M1143.500 85.500 V105.500 M1152.500 85.500 V105.500" stroke="#999"/>
<rect x="1142" y="91" width="8" height="9" fill="#4f86c6"/>
<path d="M1135 81.500 H1157 M1134.500 79 V84 M1157.500 79 V84 M1138 79.500 L1135 81.500 L1138 83.500 M1154 79.500 L1157 81.500 L1154 83.500" stroke="#2f75b5"/>
<path d="M1136 107 Q1140 110 1144 107 M1146 107 Q1150 110 1153 107" stroke="#777"/>
<!-- sigma -->
<path d="M1204 80 H1190 L1197 86 L1190 92 H1204" stroke="#555" stroke-width="2"/>
<!-- fill -->
<rect x="1190.500" y="101.500" width="13" height="15" fill="#fff" stroke="#888"/><rect x="1190" y="101" width="14" height="3" fill="#777"/>
<path d="M1197 106 V114 M1193.500 110.500 L1197 114 L1200.500 110.500" stroke="#2f75b5" stroke-width="2"/>
<!-- eraser -->
<path d="M1190 134 L1199 125.500 L1204 130 L1196 138 H1193Z" fill="#ef8f9f"/>
<!-- sort -->
<text x="1286" y="93" font-size="16" font-weight="bold" fill="#4f86c6" font-family="Liberation Sans">A</text>
<text x="1287" y="107" font-size="16" font-weight="bold" fill="#8e5fb5" font-family="Liberation Sans">Z</text>
<path d="M1300 89 H1316 L1310 96 V103 H1306 V96Z" fill="#8a8a8a" stroke="#777"/>
<!-- find -->
<circle cx="1347.500" cy="91" r="8.500" stroke="#3f83c6" stroke-width="2"/>
<path d="M1341 98 L1333 106" stroke="#3f83c6" stroke-width="3"/>
<path d="M1429 160.500 L1434 155.500 L1439 160.500" stroke="#666"/>
<!-- formula bar -->
<path d="M100 186 H110 L105 191Z" fill="#777"/>
<path d="M130 184 v1 M130 188 v1 M130 192 v1" stroke="#aaa" stroke-width="2"/>
<path d="M159 183 L169 193 M169 183 L159 193" stroke="#c8c8c8" stroke-width="1.500"/>
<path d="M194 188 L199 193 L207 183" stroke="#c8c8c8" stroke-width="2"/>
<path d="M1428 186 L1433 191 L1438 186" stroke="#777" stroke-width="1.500"/>
<!-- corner triangle -->
<path d="M27 217 V223 H20Z" fill="#c4c4c4"/>
<!-- scroll arrows -->
<path d="M1432 222 L1435 218 L1438 222Z" fill="#777"/><path d="M1432 810 L1435 814 L1438 810Z" fill="#777"/>
<path d="M893 832.500 L897 829 V836Z" fill="#777"/><path d="M1422 832.500 L1418 829 V836Z" fill="#777"/>
<!-- sheet nav -->
<path d="M40 832 L35 828.500 V835.500Z" fill="#bcbcbc"/>
<path d="M64 828.500 L69 832 L64 835.500Z" fill="#217346"/>
<!-- add sheet -->
<circle cx="844" cy="832" r="7" stroke="#888" stroke-width="1.500"/><path d="M840 832 H848 M844 828 V836" stroke="#888" stroke-width="1.500"/>
<path d="M873 828 v1.500 M873 832 v1.500 M873 836 v1.500" stroke="#aaa" stroke-width="2"/>
<!-- status -->
<path d="M67 856 Q66 851 71 851 M76 851 L72 856 M78 856 H68 M77 854 L79 856 L77 858" stroke="#555"/>
<path d="M1162.500 851.500 H1173.500 V860 H1162.500Z M1166 851.500 V860 M1170 851.500 V860 M1162.500 855 H1173.500" stroke="#666"/>
<path d="M1201.500 851.500 H1214.500 V860 H1201.500Z M1204.500 854 H1211.500 M1204.500 857 H1211.500" stroke="#666"/>
<path d="M1241.500 851.500 H1254.500 V860 M1241.500 851.500 V860 M1248 851.500 V857 M1241.500 857 H1254.500" stroke="#666"/>
<path d="M1274 857.500 H1282 M1287 857.500 H1387 M1337 855 V860 M1395 853 V860 M1391 857.500 H1399" stroke="#555"/>
<rect x="1322" y="852" width="5" height="8" fill="#666"/>
</svg>

</body></html>
